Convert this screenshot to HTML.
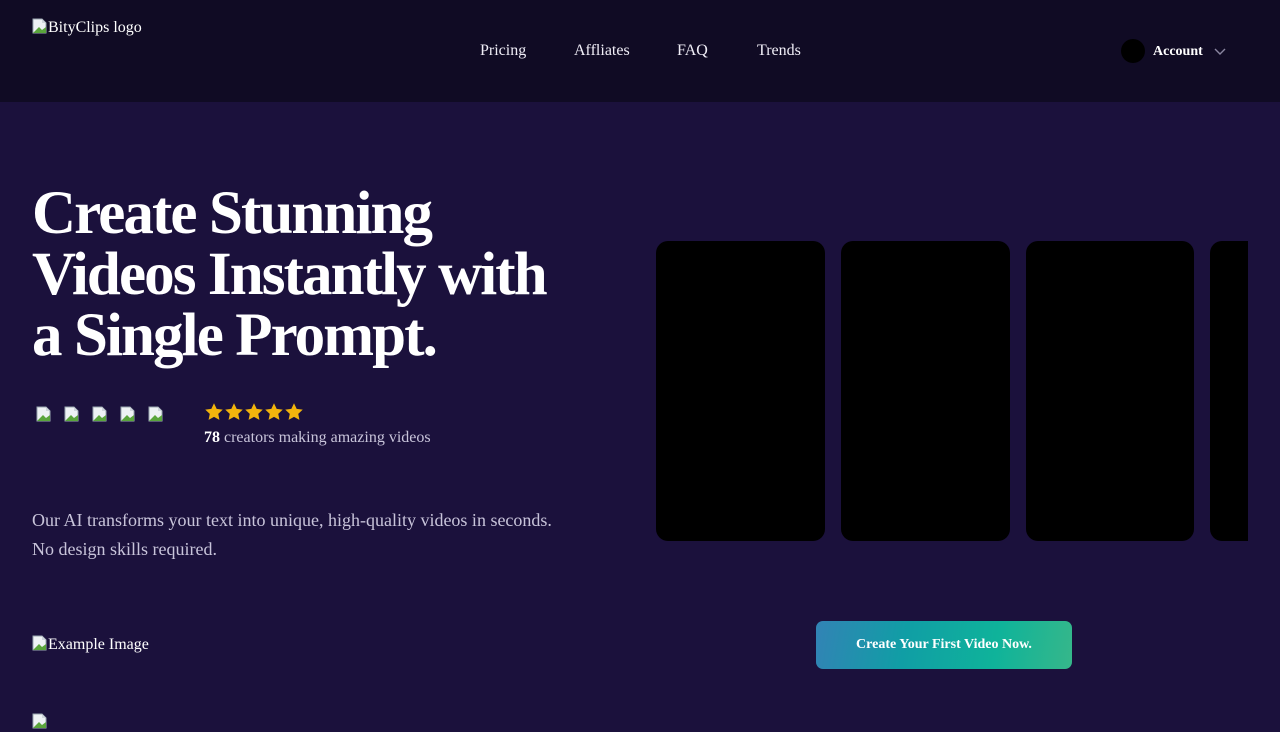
<!DOCTYPE html>
<html><head><meta charset="utf-8"><style>
*{margin:0;padding:0;box-sizing:border-box}
body{width:1280px;height:720px;overflow:hidden;background:#1b113c;font-family:"Liberation Serif",serif;color:#fff;position:relative}
.hdr{position:absolute;left:0;top:0;width:1280px;height:102px;background:#100b24}
.abs{position:absolute;white-space:nowrap}
.bi{display:inline-block;width:16px;height:16px;vertical-align:-2px}
.nav{font-size:16px;color:#f0eef7;top:41px}
h1{position:absolute;left:32px;top:183px;font-size:61px;line-height:61px;font-weight:700;letter-spacing:-1.9px;color:#fff}
.card{position:absolute;top:241px;width:169px;height:300px;background:#000;border-radius:12px}
.btn{position:absolute;left:816px;top:621px;width:256px;height:48px;border-radius:7px;background:linear-gradient(100deg,#3283b5,#109ea5 35%,#0fb39a 70%,#36b78a);font-weight:700;font-size:14px;display:flex;align-items:center;justify-content:center}
</style></head><body>
<svg width="0" height="0" style="position:absolute"><defs><symbol id="b" viewBox="0 0 16 16"><path d="M1 1h9l4 4v10H1z" fill="#eef2f5" stroke="#9aa6b0"/><path d="M1 15l6-6 3 3 4-3v6z" fill="#5aa53c"/><path d="M10 1v4h4" fill="#cfd6dc"/></symbol>
<symbol id="s" viewBox="0 0 24 24"><path d="M12 1.5l3.2 6.8 7.3.9-5.4 5 1.4 7.3L12 17.9l-6.5 3.6 1.4-7.3-5.4-5 7.3-.9z" fill="#f2b40c"/></symbol></defs></svg>
<div class="hdr"></div>
<div class="abs" style="left:32px;top:18px;font-size:16px"><svg class="bi"><use href="#b"/></svg>BityClips logo</div>
<div class="abs nav" style="left:480px;top:42px">Pricing</div>
<div class="abs nav" style="left:574px;top:42px">Affliates</div>
<div class="abs nav" style="left:677px;top:42px">FAQ</div>
<div class="abs nav" style="left:757px;top:42px">Trends</div>
<div class="abs" style="left:1121px;top:39px;width:24px;height:24px;border-radius:50%;background:#000"></div>
<div class="abs" style="left:1153px;top:44px;font-size:14px;font-weight:700">Account</div>
<svg class="abs" style="left:1214px;top:48px" width="12" height="8" viewBox="0 0 12 8"><path d="M1 1l5 5 5-5" stroke="#8a86a0" stroke-width="1.4" fill="none"/></svg>
<h1>Create Stunning<br>Videos Instantly with<br>a Single Prompt.</h1>
<div class="abs" style="left:36px;top:406px">
<svg class="bi"><use href="#b"/></svg><svg class="bi" style="margin-left:12px"><use href="#b"/></svg><svg class="bi" style="margin-left:12px"><use href="#b"/></svg><svg class="bi" style="margin-left:12px"><use href="#b"/></svg><svg class="bi" style="margin-left:12px"><use href="#b"/></svg></div>
<div class="abs" style="left:204px;top:402px">
<svg width="20" height="20"><use href="#s"/></svg><svg width="20" height="20"><use href="#s"/></svg><svg width="20" height="20"><use href="#s"/></svg><svg width="20" height="20"><use href="#s"/></svg><svg width="20" height="20"><use href="#s"/></svg></div>
<div class="abs" style="left:204px;top:429px;font-size:16px;color:#c8c4da"><b style="color:#fff">78</b> creators making amazing videos</div>
<div class="abs" style="left:32px;top:506px;font-size:18px;line-height:29px;color:#c8c4da">Our AI transforms your text into unique, high-quality videos in seconds.<br>No design skills required.</div>
<div class="card" style="left:656px"></div>
<div class="card" style="left:841px"></div>
<div class="card" style="left:1026px;width:168px"></div>
<div class="card" style="left:1210px;width:38px;border-radius:12px 0 0 12px"></div>
<div class="btn">Create Your First Video Now.</div>
<div class="abs" style="left:32px;top:635px;font-size:16px"><svg class="bi"><use href="#b"/></svg>Example Image</div>
<div class="abs" style="left:32px;top:713px"><svg class="bi"><use href="#b"/></svg></div>
</body></html>
